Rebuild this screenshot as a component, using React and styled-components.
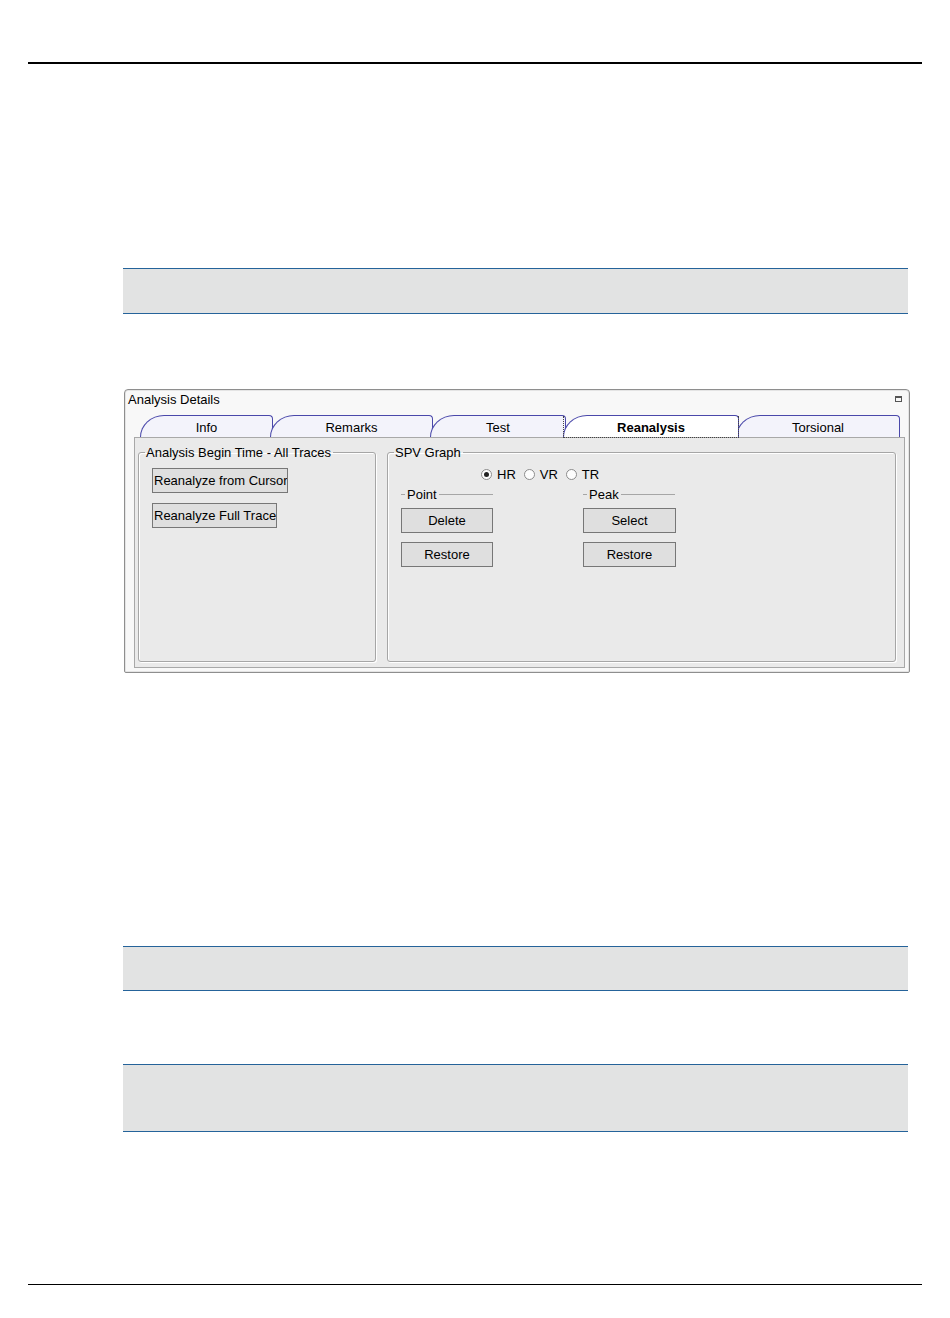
import React from "react";
import styled, { createGlobalStyle } from "styled-components";

const GlobalStyle = createGlobalStyle`
  html, body { margin: 0; padding: 0; background: #ffffff; }
  body { font-family: "Liberation Sans", Arial, sans-serif; color: #000; }
  * { box-sizing: border-box; }
`;

const Page = styled.div`
  width: 950px;
  height: 1318px;
  padding-top: 62px;
  display: flex;
  flex-direction: column;
`;

const Rule = styled.div`
  margin: ${(p) => p.$mt || 0}px 28px 0 28px;
  height: ${(p) => p.$thick}px;
  background: #000;
`;

const Content = styled.div`
  padding: 0 42px 0 123px;
  display: flex;
  flex-direction: column;
`;

const Band = styled.div`
  margin-top: ${(p) => p.$mt}px;
  height: ${(p) => p.$h}px;
  background: #e2e3e3;
  border-top: 1px solid #25639a;
  border-bottom: 1px solid #25639a;
`;

const Window = styled.div`
  margin: 75px -2px 0 1px;
  height: 284px;
  border: 1px solid #8e8e8e;
  border-radius: 4px 4px 2px 2px;
  background: #f8f8f8;
  box-shadow: inset 0 0 0 1px #e4e4e4;
  display: flex;
  flex-direction: column;
`;

const TitleBar = styled.div`
  height: 24px;
  padding: 0 7px 5px 3px;
  display: flex;
  align-items: center;
  justify-content: space-between;
  font-size: 13px;
`;

const MinIcon = styled.span`
  width: 7px;
  height: 6px;
  border: 1px solid #555;
  border-top-width: 2px;
  margin-top: -2px;
`;

const Body = styled.div`
  flex: 1;
  display: flex;
  flex-direction: column;
  padding: 0 4px 4px 9px;
`;

const TabRow = styled.div`
  height: 23px;
  padding-left: 6px;
  display: flex;
  align-items: flex-end;
`;

const Tab = styled.div`
  position: relative;
  width: ${(p) => p.$w}px;
  height: 22px;
  margin-left: ${(p) => (p.$first ? 0 : -3)}px;
  border: 1px solid #4a48aa;
  border-bottom: none;
  border-radius: 24px 4px 0 0 / 22px 4px 0 0;
  background: ${(p) => (p.$active ? "#ffffff" : "#f3f3fb")};
  display: flex;
  align-items: center;
  justify-content: center;
  font-size: 13px;
  font-weight: ${(p) => (p.$active ? 700 : 400)};
  padding-top: 1px;
  z-index: ${(p) => (p.$active ? 2 : 1)};
  &::after {
    content: "";
    display: ${(p) => (p.$active ? "block" : "none")};
    position: absolute;
    left: -1px;
    right: -1px;
    top: 0;
    bottom: -1px;
    border: 1px dotted #444;
    border-top: none;
  }
`;

const Panel = styled.div`
  flex: 1;
  border: 1px solid #a8a8a8;
  background: #eaeaea;
  display: flex;
  gap: 11px;
  padding: 7px 8px 5px 3px;
`;

const Group = styled.fieldset`
  margin: 0;
  min-width: 0;
  width: ${(p) => (p.$w ? `${p.$w}px` : "auto")};
  flex: ${(p) => (p.$w ? "none" : 1)};
  border: 1px solid #a6a6a6;
  border-radius: 3px;
  box-shadow: 1px 1px 0 #ffffff, inset 1px 1px 0 #ffffff;
  padding: ${(p) => p.$pt}px 0 0 13px;
  display: flex;
  flex-direction: column;
  gap: ${(p) => p.$gap || 0}px;
`;

const Legend = styled.legend`
  margin-left: -7px;
  padding: 0 2px 0 1px;
  font-size: 13px;
  line-height: 15px;
`;

const SubLegend = styled.legend`
  margin-left: 4px;
  padding: 0 2px;
  font-size: 13px;
  line-height: 15px;
`;

const Button = styled.button`
  width: ${(p) => p.$w}px;
  height: 25px;
  margin: 0;
  padding: 0 ${(p) => (p.$left ? 1 : 0)}px;
  border: 1px solid #777;
  border-radius: 0;
  background: #dfdfdf;
  font-family: "Liberation Sans", Arial, sans-serif;
  font-size: 13px;
  color: #000;
  text-align: ${(p) => (p.$left ? "left" : "center")};
  white-space: nowrap;
  overflow: hidden;
`;

const RadioRow = styled.div`
  display: flex;
  align-items: center;
  padding-left: 80px;
  height: 15px;
  font-size: 13px;
`;

const RadioItem = styled.label`
  display: flex;
  align-items: center;
  gap: 5px;
  margin-right: 8px;
`;

const RadioCircle = styled.span`
  width: 11px;
  height: 11px;
  border-radius: 50%;
  border: 1px solid #8c8c8c;
  background: #fdfdfd;
  display: flex;
  align-items: center;
  justify-content: center;
  &::after {
    content: "";
    width: 5px;
    height: 5px;
    border-radius: 50%;
    background: ${(p) => (p.$checked ? "#222" : "transparent")};
  }
`;

const Columns = styled.div`
  display: flex;
  gap: 90px;
  margin-top: 5px;
`;

const SubGroup = styled.fieldset`
  margin: 0;
  min-width: 0;
  width: 92px;
  border: none;
  border-top: 1px solid #a6a6a6;
  padding: 6px 0 0 0;
  display: flex;
  flex-direction: column;
  gap: 9px;
`;

const tabs = [
  { label: "Info", w: 133 },
  { label: "Remarks", w: 163 },
  { label: "Test", w: 136 },
  { label: "Reanalysis", w: 176, active: true },
  { label: "Torsional", w: 164 },
];

export default function App() {
  return (
    <>
      <GlobalStyle />
      <Page>
        <Rule $thick={2} />
        <Content>
          <Band $mt={204} $h={46} />
          <Window>
            <TitleBar>
              <span>Analysis Details</span>
              <MinIcon />
            </TitleBar>
            <Body>
              <TabRow>
                {tabs.map((t, i) => (
                  <Tab key={t.label} $w={t.w} $first={i === 0} $active={t.active}>
                    {t.label}
                  </Tab>
                ))}
              </TabRow>
              <Panel>
                <Group $w={238} $pt={8} $gap={10}>
                  <Legend>Analysis Begin Time - All Traces</Legend>
                  <Button $w={136} $left>Reanalyze from Cursor</Button>
                  <Button $w={125} $left>Reanalyze Full Trace</Button>
                </Group>
                <Group $pt={7}>
                  <Legend>SPV Graph</Legend>
                  <RadioRow>
                    <RadioItem>
                      <RadioCircle $checked />
                      HR
                    </RadioItem>
                    <RadioItem>
                      <RadioCircle />
                      VR
                    </RadioItem>
                    <RadioItem>
                      <RadioCircle />
                      TR
                    </RadioItem>
                  </RadioRow>
                  <Columns>
                    <SubGroup>
                      <SubLegend>Point</SubLegend>
                      <Button $w={92}>Delete</Button>
                      <Button $w={92}>Restore</Button>
                    </SubGroup>
                    <SubGroup>
                      <SubLegend>Peak</SubLegend>
                      <Button $w={93}>Select</Button>
                      <Button $w={93}>Restore</Button>
                    </SubGroup>
                  </Columns>
                </Group>
              </Panel>
            </Body>
          </Window>
          <Band $mt={273} $h={45} />
          <Band $mt={73} $h={68} />
        </Content>
        <Rule $thick={1} $mt={152} />
      </Page>
    </>
  );
}
